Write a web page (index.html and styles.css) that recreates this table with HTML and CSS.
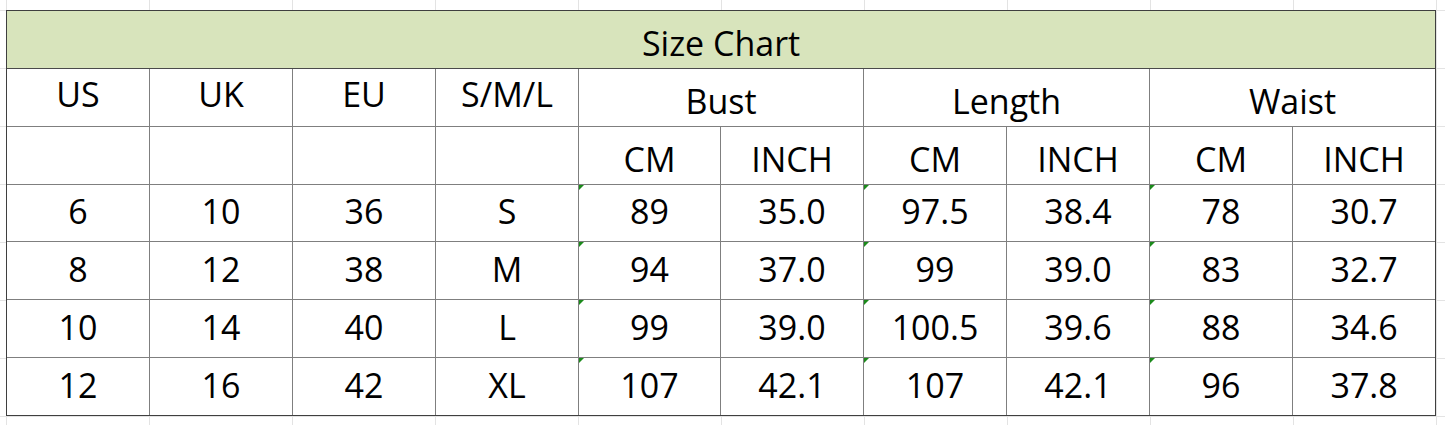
FILE: index.html
```html
<!DOCTYPE html>
<html lang="en">
<head>
<meta charset="utf-8">
<title>Size Chart</title>
<link rel="stylesheet" href="styles.css">
</head>
<body>
<div class="sheet">
  <table class="chart">
    <colgroup>
      <col class="w143"><col class="w143"><col class="w143"><col class="w143"><col class="w142">
      <col class="w143"><col class="w143"><col class="w143"><col class="w143"><col class="w142">
    </colgroup>
    <tr class="r58">
      <td class="title" colspan="10">Size Chart</td>
    </tr>
    <tr class="r58 head">
      <td>US</td><td>UK</td><td>EU</td><td>S/M/L</td>
      <td class="group" colspan="2">Bust</td>
      <td class="group" colspan="2">Length</td>
      <td class="group" colspan="2">Waist</td>
    </tr>
    <tr class="r58 sub">
      <td></td><td></td><td></td><td></td>
      <td>CM</td><td>INCH</td><td>CM</td><td>INCH</td><td>CM</td><td>INCH</td>
    </tr>
    <tr class="r57 data">
      <td>6</td><td>10</td><td>36</td><td>S</td>
      <td class="flag">89</td><td>35.0</td><td class="flag">97.5</td><td>38.4</td><td class="flag">78</td><td>30.7</td>
    </tr>
    <tr class="r58 data">
      <td>8</td><td>12</td><td>38</td><td>M</td>
      <td class="flag">94</td><td>37.0</td><td class="flag">99</td><td>39.0</td><td class="flag">83</td><td>32.7</td>
    </tr>
    <tr class="r58 data">
      <td>10</td><td>14</td><td>40</td><td>L</td>
      <td class="flag">99</td><td>39.0</td><td class="flag">100.5</td><td>39.6</td><td class="flag">88</td><td>34.6</td>
    </tr>
    <tr class="r57 data">
      <td>12</td><td>16</td><td>42</td><td>XL</td>
      <td class="flag">107</td><td>42.1</td><td class="flag">107</td><td>42.1</td><td class="flag">96</td><td>37.8</td>
    </tr>
  </table>
</div>
</body>
</html>
```
FILE: styles.css
```css
html, body {
  margin: 0;
  padding: 0;
}

body {
  width: 1445px;
  height: 425px;
  overflow: hidden;
  background-color: #ffffff;
  background-image:
    repeating-linear-gradient(to right, #e3e3e3 0 1px, transparent 1px 143px),
    repeating-linear-gradient(to bottom, #e3e3e3 0 1px, transparent 1px 58px);
  background-position: 6px 0, 0 10px;
  font-family: "Open Sans", "Noto Sans", "Liberation Sans", sans-serif;
  color: #000;
}

.sheet {
  padding: 10px 0 0 6px;
}

.chart {
  width: 1430px;
  table-layout: fixed;
  border-collapse: separate;
  border-spacing: 0;
  border: 1px solid #3f3f3f;
  background: #fff;
}

.w143 { width: 143px; }
.w142 { width: 142px; }

.r58 { height: 58px; }
.r57 { height: 57px; }

.chart td {
  box-sizing: border-box;
  padding: 0;
  border-right: 1px solid #7f7f7f;
  border-bottom: 1px solid #7f7f7f;
  text-align: center;
  vertical-align: middle;
  font-size: 34px;
  font-weight: 450;
  line-height: 34px;
  white-space: nowrap;
  overflow: hidden;
}

.chart td:last-child { border-right: 0; }
.chart tr:last-child td { border-bottom: 0; }

.chart .title {
  background: #d8e4bc;
  border-bottom-color: #4a4a4a;
  padding-top: 6px;
}

.head td { padding-bottom: 8px; }
.head .group { padding-bottom: 0; padding-top: 6px; }

.sub td { padding-top: 7px; }

.data td { padding-bottom: 4px; }

.chart .flag { position: relative; }
.chart .flag::before {
  content: "";
  position: absolute;
  top: 0;
  left: 0;
  width: 0;
  height: 0;
  border-top: 5px solid #1b8a1b;
  border-right: 5px solid transparent;
}
```
